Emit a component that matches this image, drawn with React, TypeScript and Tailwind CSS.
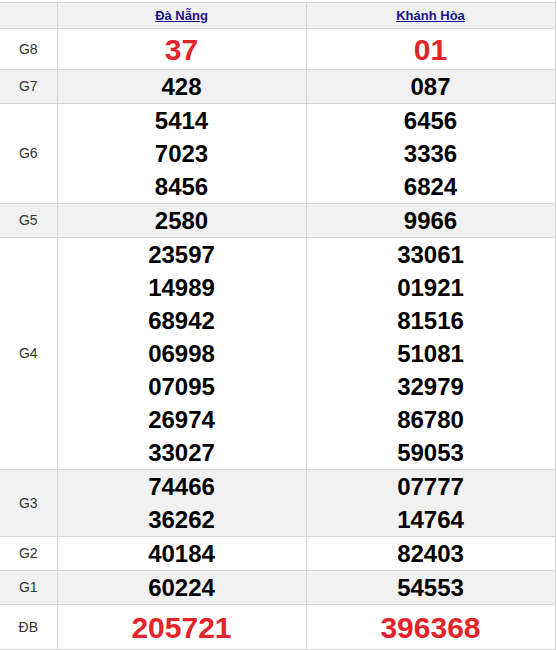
const rows: { label: string; dn: string[]; kh: string[]; big?: boolean; bg: boolean; h?: string }[] = [
  { label: "G8", dn: ["37"], kh: ["01"], big: true, bg: false, h: "h-[40px]" },
  { label: "G7", dn: ["428"], kh: ["087"], bg: true },
  { label: "G6", dn: ["5414", "7023", "8456"], kh: ["6456", "3336", "6824"], bg: false },
  { label: "G5", dn: ["2580"], kh: ["9966"], bg: true },
  {
    label: "G4",
    dn: ["23597", "14989", "68942", "06998", "07095", "26974", "33027"],
    kh: ["33061", "01921", "81516", "51081", "32979", "86780", "59053"],
    bg: false,
  },
  { label: "G3", dn: ["74466", "36262"], kh: ["07777", "14764"], bg: true },
  { label: "G2", dn: ["40184"], kh: ["82403"], bg: false },
  { label: "G1", dn: ["60224"], kh: ["54553"], bg: true },
  { label: "ĐB", dn: ["205721"], kh: ["396368"], big: true, bg: false, h: "h-[44px]" },
];

function Cell({ nums, big, h }: { nums: string[]; big?: boolean; h?: string }) {
  return (
    <td className="border border-[#d6d6d6] p-0 text-center align-middle">
      {nums.map((n) => (
        <div
          key={n}
          className={
            big
              ? `${h} flex items-center justify-center text-[30px] font-bold text-[#e3242b]`
              : "h-[33px] leading-[33px] text-[24px] font-bold text-black"
          }
        >
          {n}
        </div>
      ))}
    </td>
  );
}

export default function App() {
  return (
    <div className="w-[557px] h-[650px] bg-white pt-[2px] font-['Liberation_Sans',Arial,sans-serif]">
      <table className="w-[555px] border-collapse table-fixed">
        <colgroup>
          <col className="w-[57px]" />
          <col className="w-[249px]" />
          <col className="w-[249px]" />
        </colgroup>
        <thead>
          <tr className="bg-[#f1f1f1] h-[26px]">
            <th className="border border-l-0 border-[#d6d6d6] p-0"></th>
            <th className="border border-[#d6d6d6] p-0 text-[13px] font-bold">
              <a href="#" className="text-[#15158a] underline">Đà Nẵng</a>
            </th>
            <th className="border border-[#d6d6d6] p-0 text-[13px] font-bold">
              <a href="#" className="text-[#15158a] underline">Khánh Hòa</a>
            </th>
          </tr>
        </thead>
        <tbody>
          {rows.map((r) => (
            <tr key={r.label} className={r.bg ? "bg-[#f1f1f1]" : "bg-white"}>
              <td className="border border-l-0 border-[#d6d6d6] p-0 text-center align-middle text-[14px] text-[#333]">
                {r.label}
              </td>
              <Cell nums={r.dn} big={r.big} h={r.h} />
              <Cell nums={r.kh} big={r.big} h={r.h} />
            </tr>
          ))}
        </tbody>
      </table>
    </div>
  );
}
